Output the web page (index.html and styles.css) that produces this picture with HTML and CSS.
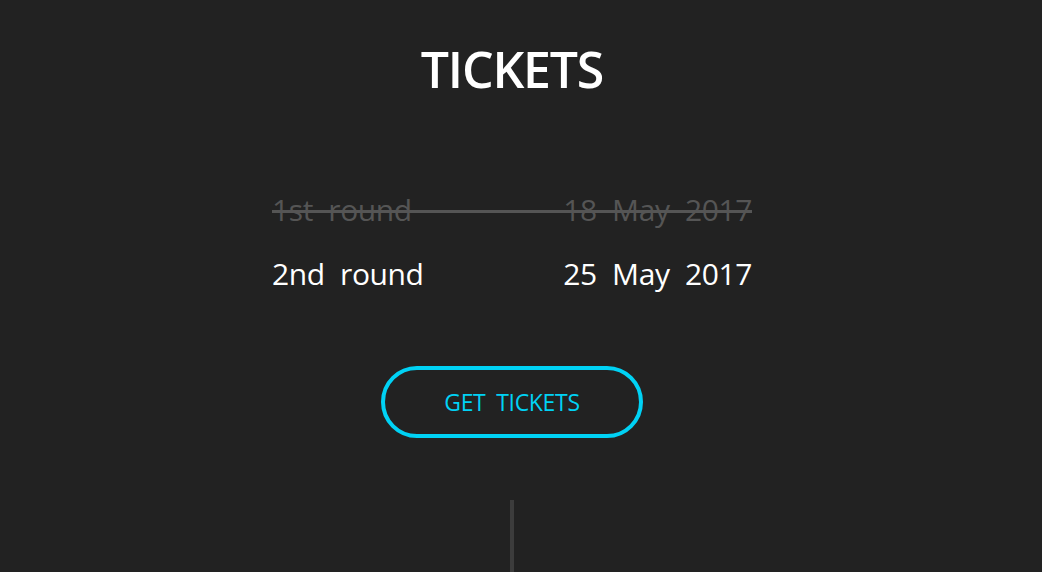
FILE: index.html
```html
<!DOCTYPE html>
<html>
<head>
<meta charset="utf-8">
<link rel="stylesheet" href="styles.css">
</head>
<body>
<main class="page">
  <h1 class="title">TICKETS</h1>
  <div class="rounds">
    <div class="round past"><span>1st round</span><span>18 May 2017</span></div>
    <div class="round"><span>2nd round</span><span>25 May 2017</span></div>
  </div>
  <a class="btn" href="#">GET TICKETS</a>
  <div class="divider"></div>
</main>
</body>
</html>
```
FILE: styles.css
```css
html, body {
  margin: 0;
  padding: 0;
  background: #222222;
  height: 100%;
  overflow: hidden;
}
.page {
  width: 1024px;
  display: flex;
  flex-direction: column;
  align-items: center;
  font-family: "Open Sans", "Noto Sans", sans-serif;
  color: #ffffff;
}
.title {
  margin: 37px 0 0;
  font-size: 50px;
  font-weight: 600;
  line-height: 64px;
  letter-spacing: -1.2px;
}
.rounds {
  width: 480px;
  margin-top: 88px;
  display: flex;
  flex-direction: column;
  gap: 22px;
}
.round {
  position: relative;
  display: flex;
  justify-content: space-between;
  font-size: 30px;
  line-height: 42px;
  font-weight: 400;
  word-spacing: 8px;
  letter-spacing: -0.4px;
}
.round.past {
  color: #555555;
}
.round.past::after {
  content: "";
  position: absolute;
  left: 0;
  right: 0;
  top: 21px;
  height: 3px;
  background: #555555;
}
.btn {
  margin-top: 71px;
  box-sizing: border-box;
  width: 262px;
  height: 72px;
  border: 4px solid #00d2f5;
  border-radius: 36px;
  display: flex;
  align-items: center;
  justify-content: center;
  color: #00d2f5;
  text-decoration: none;
  font-size: 23px;
  font-weight: 400;
  word-spacing: 5px;
  letter-spacing: -0.3px;
}
.divider {
  margin-top: 62px;
  width: 4px;
  height: 80px;
  background: #3c3c3c;
}
```
